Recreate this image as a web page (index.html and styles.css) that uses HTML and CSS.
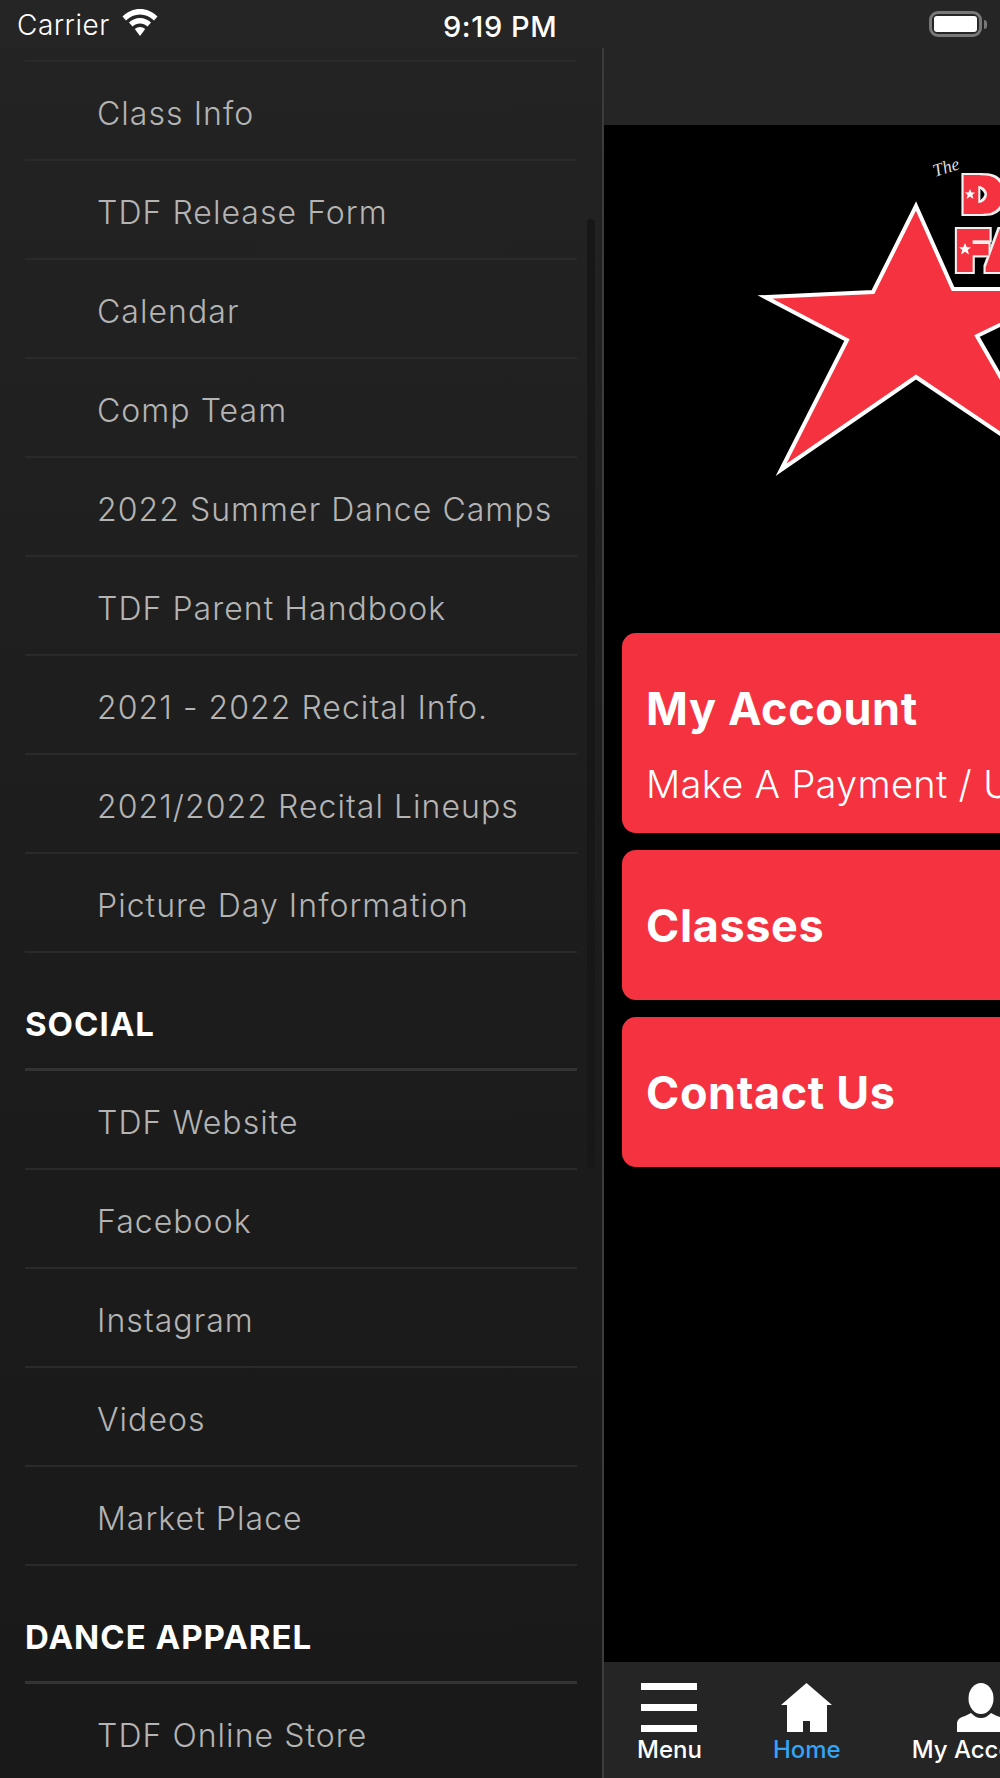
FILE: index.html
```html
<!DOCTYPE html>
<html lang="en">
<head>
	<meta charset="utf-8" />
	<title>The Dance Factory</title>
	<link rel="stylesheet" href="styles.css">
</head>
<body>
	<div id="status">
		<div class="status-left">
			<span>Carrier</span>
			<svg class="wifi" viewBox="0 0 36 27">
				<path d="M18 0C11.500 0 5.500 2.600 0.500 7.500L4 11.500C8 7.700 12.700 5.600 18 5.600S28 7.700 32 11.500L35.500 7.500C30.500 2.600 24.500 0 18 0Z" fill="#fff"/>
				<path d="M18 9C13.800 9 10.300 10.500 7 13.500L10.500 17.500C12.700 15.500 15.100 14.500 18 14.500S23.300 15.500 25.500 17.500L29 13.500C25.700 10.500 22.200 9 18 9Z" fill="#fff"/>
				<path d="M18 18C16 18 14.400 18.700 12.800 20L18 27L23.200 20C21.600 18.700 20 18 18 18Z" fill="#fff"/>
			</svg>
		</div>
		<div class="status-time">9:19 PM</div>
		<div class="battery">
			<div class="battery-body"><div class="battery-fill"></div></div>
			<div class="battery-tip"></div>
		</div>
	</div>

	<div id="app">
		<div id="drawer">
			<ul class="menu">
				<li>Class Info</li>
				<li>TDF Release Form</li>
				<li>Calendar</li>
				<li>Comp Team</li>
				<li>2022 Summer Dance Camps</li>
				<li>TDF Parent Handbook</li>
				<li>2021 - 2022 Recital Info.</li>
				<li>2021/2022 Recital Lineups</li>
				<li>Picture Day Information</li>
			</ul>
			<h2>SOCIAL</h2>
			<ul class="menu">
				<li>TDF Website</li>
				<li>Facebook</li>
				<li>Instagram</li>
				<li>Videos</li>
				<li>Market Place</li>
			</ul>
			<h2>DANCE APPAREL</h2>
			<ul class="menu">
				<li>TDF Online Store</li>
			</ul>
			<div class="scrollbar"></div>
		</div>

		<div id="main">
			<div class="navbar"></div>
			<div class="content">
				<div class="logo">
					<svg viewBox="0 0 396 507" width="396" height="507">
						<defs>
							<filter id="chunky" x="-20%" y="-20%" width="140%" height="140%">
								<feMorphology in="SourceAlpha" operator="dilate" radius="2.500 1.500" result="fat"/>
								<feMorphology in="fat" operator="dilate" radius="1.500" result="edge"/>
								<feFlood flood-color="#f0f0f0"/>
								<feComposite in2="edge" operator="in" result="white"/>
								<feFlood flood-color="#f5323f"/>
								<feComposite in2="fat" operator="in" result="red"/>
								<feMerge>
									<feMergeNode in="white"/>
									<feMergeNode in="red"/>
								</feMerge>
							</filter>
						</defs>
						<polygon class="logo-star" points="312,81 349,164 470,164 373,211 450,345 312,252 177,345 243,215 161,172 269,167"/>
						<text class="logo-the" transform="translate(331 52) rotate(-18)">The</text>
						<text class="logo-word logo-d" x="358" y="87">D</text>
						<text class="logo-word logo-f" x="351" y="145">FA</text>
						<polygon class="logo-mini" points="366,64 367.500,67.500 371,67.500 368.300,70 369.500,74 366,71.500 362.500,74 363.700,70 361,67.500 364.500,67.500"/>
						<polygon class="logo-mini" points="361,118 362.800,122.200 367,122.200 363.700,125 365,129.500 361,126.800 357,129.500 358.300,125 355,122.200 359.200,122.200"/>
					</svg>
				</div>
				<div class="cards">
					<div class="card card-tall">
						<div class="card-title">My Account</div>
						<div class="card-sub">Make A Payment / Update Your Info</div>
					</div>
					<div class="card"><div class="card-title">Classes</div></div>
					<div class="card"><div class="card-title">Contact Us</div></div>
				</div>
			</div>
			<div class="tabbar">
				<div class="tab">
					<svg viewBox="0 0 56 49" width="56" height="49">
						<rect y="0" width="56" height="7" fill="#fff"/>
						<rect y="21" width="56" height="7" fill="#fff"/>
						<rect y="42" width="56" height="7" fill="#fff"/>
					</svg>
					<span>Menu</span>
				</div>
				<div class="tab active">
					<svg viewBox="0 0 52 49" width="52" height="49">
						<path d="M25.500 0L51 22H46V49H29V38H22V49H6V22H0Z" fill="#fff"/>
					</svg>
					<span>Home</span>
				</div>
				<div class="tab">
					<svg viewBox="0 0 48 49" width="48" height="49">
						<ellipse cx="24" cy="15.500" rx="12.500" ry="15.500" fill="#fff"/>
						<path d="M0 49V41C0 36 4 34 8 33L14 30C17 33 20 35 24 35S31 33 34 30L40 33C44 34 48 36 48 41V49Z" fill="#fff"/>
					</svg>
					<span>My Account</span>
				</div>
			</div>
		</div>
	</div>
</body>
</html>
```
FILE: styles.css
```css
html, body {margin:0; padding:0; background:#000;}
body {width:1000px; height:1778px; overflow:hidden; font-family:Inter,"Liberation Sans",sans-serif; color:#fff;}

#status {display:flex; justify-content:space-between; align-items:center; height:48px; padding:0 13px 0 17px; background:#252525; position:relative;}
.status-left {display:flex; align-items:center; gap:12px; padding-top:2px; font-size:28px; font-weight:300; letter-spacing:0.5px;}
.wifi {width:36px; height:27px; margin-bottom:5px;}
.status-time {position:absolute; left:443px; top:9px; font-size:29px; font-weight:500; letter-spacing:0.6px;}
.battery {display:flex; align-items:center; gap:2px;}
.battery-body {padding:2px; border:3px solid #777; border-radius:9px;}
.battery-fill {width:43px; height:16px; border-radius:3px; background:#fff;}
.battery-tip {width:3px; height:9px; background:#777; border-radius:0 4px 4px 0;}

#app {display:flex; height:1730px;}

#drawer {position:relative; width:552px; flex:none; overflow:hidden; padding:12px 25px 0; background:linear-gradient(#232323, #1c1c1c 55%, #191919); border-right:2px solid #3c3c3c;}
.menu {list-style:none; margin:0; padding:0; border-top:2px solid #2a2a2a;}
h2 + .menu {border-top:3px solid #333;}
.menu li {height:97px; line-height:104px; padding-left:72px; border-bottom:2px solid #2a2a2a; font-size:32px; font-weight:300; letter-spacing:1.05px; color:#b4b4b4; white-space:nowrap;}
#drawer h2 {margin:0; height:109px; padding-top:6px; line-height:130px; font-size:33px; font-weight:700; letter-spacing:1px; color:#fff; white-space:nowrap;}
.scrollbar {position:absolute; left:587px; top:171px; width:8px; height:949px; border-radius:4px; background:#171717;}

#main {flex:1; display:flex; flex-direction:column; min-width:0; overflow:hidden;}
.navbar {height:77px; flex:none; background:#252525;}
.content {flex:1; background:#000; padding-left:18px; overflow:hidden;}

.logo {height:508px; margin-left:-18px;}
.logo svg {display:block;}
.logo-star {fill:#f5323f; stroke:#fff; stroke-width:4; stroke-miterlimit:10;}
.logo-the {font-family:"Liberation Serif",serif; font-style:italic; font-size:18px; fill:#ddd;}
.logo-word {font-family:"DejaVu Sans",sans-serif; font-weight:700; filter:url(#chunky);}
.logo-d {font-size:48px;}
.logo-f {font-size:53px; letter-spacing:3px;}
.logo-mini {fill:#fff;}

.cards {display:flex; flex-direction:column; gap:17px; width:700px;}
.card {height:150px; box-sizing:border-box; padding:2px 24px 0; background:#f5323f; border-radius:14px; display:flex; flex-direction:column; justify-content:center; white-space:nowrap;}
.card-tall {height:200px; justify-content:flex-start; padding-top:49px;}
.card-title {font-size:45px; line-height:54px; font-weight:700; letter-spacing:0.6px;}
.card-sub {margin-top:25px; font-size:38px; line-height:46px; font-weight:300; letter-spacing:0.3px;}

.tabbar {display:flex; gap:71px; height:116px; flex:none; padding:21px 0 0 33px; box-sizing:border-box; background:#252525; white-space:nowrap;}
.tab {display:flex; flex-direction:column; align-items:center; flex:none;}
.tab svg {display:block;}
.tab span {margin-top:3px; font-size:24px; font-weight:500;}
.tab.active span {color:#34a4f4;}
```
